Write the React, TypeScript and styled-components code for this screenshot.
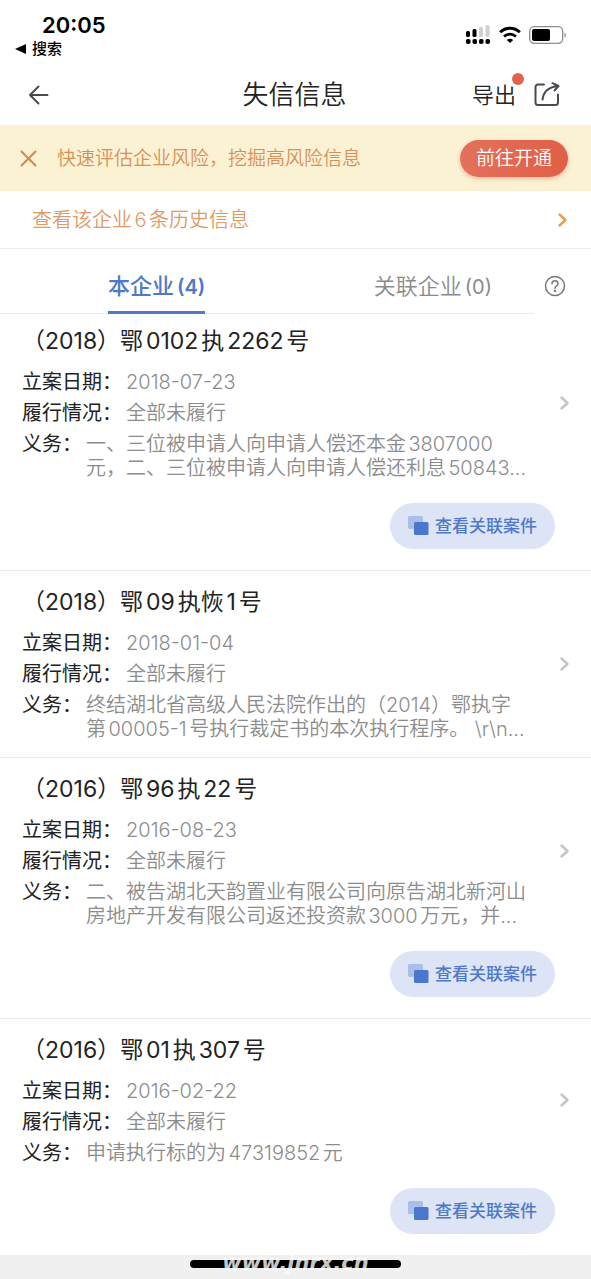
import React from 'react';
import styled, { createGlobalStyle } from 'styled-components';

const GlobalStyle = createGlobalStyle`
  *, *::before, *::after { box-sizing: border-box; }
  body {
    margin: 0;
    background: #fff;
    color: #222;
    font-family: Inter, 'Noto Sans CJK SC', sans-serif;
    text-autospace: normal;
  }
  button { font: inherit; border: 0; padding: 0; background: none; color: inherit; cursor: pointer; }
  h1, h2, p, dl, dt, dd, ul { margin: 0; padding: 0; font-weight: 400; }
  a { color: inherit; text-decoration: none; }
  svg { display: block; flex: none; }
`;

const Screen = styled.div`
  min-height: 100vh;
  display: flex;
  flex-direction: column;
`;

const StatusBar = styled.header`
  display: flex;
  justify-content: space-between;
  align-items: flex-start;
  height: 64px;
  padding: 12px 24px 0 15px;
  color: #000;
`;

const Clock = styled.div`
  padding-left: 27px;
  font-size: 22px;
  line-height: 26px;
  font-weight: 600;
`;

const BackToApp = styled.a`
  display: flex;
  align-items: center;
  gap: 6px;
  font-size: 15px;
  line-height: 22px;
  font-weight: 500;
`;

const StatusIcons = styled.div`
  display: flex;
  align-items: center;
  gap: 8px;
  padding-top: 13px;
`;

const NavBar = styled.nav`
  display: grid;
  grid-template-columns: 1fr auto 1fr;
  align-items: center;
  height: 62px;
  padding: 0 30px 0 28px;
  border-bottom: 1px solid #f0eff0;
`;

const Title = styled.h1`
  && { font-weight: 350; }
  font-size: 26px;
  line-height: 36px;
`;

const NavActions = styled.div`
  display: flex;
  justify-content: flex-end;
  align-items: center;
  gap: 18px;
`;

const ExportButton = styled.button`
  position: relative;
  && { font-size: 22px; line-height: 30px; font-weight: 350; }
`;

const Dot = styled.span`
  position: absolute;
  top: -7px;
  right: -8px;
  width: 12px;
  height: 12px;
  border-radius: 50%;
  background: #e0644b;
`;

const Banner = styled.section`
  display: flex;
  align-items: center;
  height: 65px;
  padding: 0 23px 0 20px;
  background: #fbf1d3;
  color: #d6915a;
`;

const BannerText = styled.p`
  && { font-weight: 350; }
  flex: 1;
  padding-left: 20px;
  font-size: 19px;
  line-height: 28px;
`;

const OpenButton = styled.button`
  width: 108px;
  height: 37px;
  border-radius: 19px;
  && {
    background: linear-gradient(90deg, #e4715c, #e05f46);
    color: #fff;
    font-size: 19px;
    line-height: 28px;
    font-weight: 350;
  }
  box-shadow: 0 2px 4px rgba(224, 95, 70, 0.35);
`;

const HistoryLink = styled.a`
  display: flex;
  align-items: center;
  justify-content: space-between;
  height: 58px;
  padding: 0 22px 0 32px;
  border-bottom: 1px solid #ececec;
  && { color: #e09a66; }
  font-size: 20px;
  line-height: 28px;
  font-weight: 350;
`;

const TabBar = styled.div`
  display: flex;
  height: 65px;
`;

const Tabs = styled.div`
  flex: 1;
  display: flex;
  justify-content: space-between;
  padding: 0 42px 0 108px;
  border-bottom: 1px solid #ececec;
`;

const Tab = styled.button<{ $active?: boolean }>`
  height: 65px;
  && {
    padding-top: 12px;
    border-bottom: 3px solid ${p => (p.$active ? '#5279c6' : 'transparent')};
    color: ${p => (p.$active ? '#4f78c8' : '#8a8a8a')};
    font-size: 22px;
    line-height: 30px;
    font-weight: ${p => (p.$active ? 500 : 350)};
  }
`;

const Count = styled.span<{ $active?: boolean }>`
  margin-left: 3px;
  font-size: 20px;
  font-weight: ${p => (p.$active ? 600 : 400)};
`;

const HelpButton = styled.button`
  width: 57px;
  display: flex;
  align-items: center;
  && { padding: 8px 0 0 10px; }
`;

const CaseList = styled.ul`
  margin-top: -4px;
  list-style: none;
`;

const CaseItem = styled.li`
  & + & { border-top: 1px solid #ebebeb; }
`;

const CaseBody = styled.div`
  display: flex;
  align-items: center;
  justify-content: space-between;
  gap: 12px;
  padding: 16px 20px 16px 22px;
`;

const CaseTitle = styled.h2`
  && { padding-bottom: 14px; }
  font-size: 23px;
  line-height: 30px;
`;

const Details = styled.dl`
  display: flex;
  flex-direction: column;
  gap: 7px;
`;

const Row = styled.div`
  display: flex;
  gap: 4px;
  font-size: 20px;
  line-height: 24px;
`;

const Term = styled.dt`
  flex: none;
`;

const Value = styled.dd`
  && { font-weight: 350; }
  color: #8c8c8c;
  white-space: pre;
`;

const CaseActions = styled.div`
  display: flex;
  justify-content: flex-end;
  padding: 7px 36px 21px;
`;

const RelatedButton = styled.button`
  display: flex;
  align-items: center;
  justify-content: center;
  gap: 6px;
  width: 165px;
  height: 46px;
  border-radius: 23px;
  && {
    background: #dce4f6;
    color: #4f78c8;
    font-size: 17px;
    line-height: 24px;
    font-weight: 500;
  }
`;

const Footer = styled.footer`
  position: relative;
  flex: 1;
  min-height: 23px;
  padding-top: 5px;
  background: #f0f0f0;
`;

const HomeIndicator = styled.div`
  width: 211px;
  height: 8px;
  margin: 0 auto;
  border-radius: 4px;
  background: #000;
`;

const SiteMark = styled.span`
  position: absolute;
  top: -4px;
  left: 0;
  right: 0;
  text-align: center;
  color: rgba(255, 255, 255, 0.8);
  font: italic 700 21px/24px 'DejaVu Sans', sans-serif;
`;

const SignalIcon = () => (
  <svg width="25" height="20" viewBox="0 0 25 20" aria-hidden="true">
    <rect x="0" y="6" width="4" height="6" rx="1.5" />
    <rect x="6.5" y="4" width="4" height="8" rx="1.5" />
    <rect x="13" y="2" width="4" height="10" rx="1.5" fill="#d0d0d0" />
    <rect x="19.5" y="0" width="4" height="12" rx="1.5" fill="#d0d0d0" />
    {[0, 6.5, 13, 19.5].map(x => (
      <rect key={x} x={x} y="14" width="4.5" height="5" rx="1.8" />
    ))}
  </svg>
);

const WifiIcon = () => (
  <svg width="22" height="18" viewBox="0 0 22 18" fill="none" aria-hidden="true">
    <path d="M1.2 6.2C6.700.8 15.300.8 20.8 6.2" stroke="#000" strokeWidth="3" />
    <path d="M5 10.600c3.400-3.200 8.600-3.200 12 0" stroke="#000" strokeWidth="2.8" />
    <path d="M7.800 14c1.800-1.700 4.600-1.700 6.400 0L11 17z" fill="#000" />
  </svg>
);

const BatteryIcon = () => (
  <svg width="38" height="18" viewBox="0 0 38 18" fill="none" aria-hidden="true">
    <rect x=".7" y=".7" width="33" height="16.6" rx="4.5" stroke="#8c8c8c" strokeWidth="1.3" />
    <rect x="3" y="3" width="18" height="12" rx="2" fill="#000" />
    <path d="M35.500 6.500c1.800.6 1.800 4.400 0 5z" fill="#8c8c8c" />
  </svg>
);

const Chevron = ({ color }: { color: string }) => (
  <svg width="12" height="16" viewBox="0 0 12 16" fill="none" aria-hidden="true">
    <path d="M2.500 2.500L8.500 8l-6 5.500" stroke={color} strokeWidth="2.4" strokeLinecap="round" strokeLinejoin="round" />
  </svg>
);

const ShareIcon = () => (
  <svg width="27" height="26" viewBox="0 0 27 26" fill="none" stroke="#4a4a50" strokeWidth="2" strokeLinecap="round" strokeLinejoin="round">
    <path d="M10 2.500H4A2.500 2.500 0 0 0 1.500 5v15.500A2.500 2.500 0 0 0 4 23h17.500a2.500 2.500 0 0 0 2.500-2.500v-8" />
    <path d="M8.500 17.500C9.500 10 14.500 5 24 4M18.500 1.200L24.500 4l-4 4.500" />
  </svg>
);

type CaseRecord = { title: string; date: string; status: string; duty: string; related: boolean };

const cases: CaseRecord[] = [
  {
    title: '（2018）鄂0102执2262号',
    date: '2018-07-23',
    status: '全部未履行',
    duty: '一、三位被申请人向申请人偿还本金3807000\n元，二、三位被申请人向申请人偿还利息50843...',
    related: true,
  },
  {
    title: '（2018）鄂09执恢1号',
    date: '2018-01-04',
    status: '全部未履行',
    duty: '终结湖北省高级人民法院作出的（2014）鄂执字\n第00005-1号执行裁定书的本次执行程序。 \\r\\n...',
    related: false,
  },
  {
    title: '（2016）鄂96执22号',
    date: '2016-08-23',
    status: '全部未履行',
    duty: '二、被告湖北天韵置业有限公司向原告湖北新河山\n房地产开发有限公司返还投资款3000万元，并...',
    related: true,
  },
  {
    title: '（2016）鄂01执307号',
    date: '2016-02-22',
    status: '全部未履行',
    duty: '申请执行标的为47319852元',
    related: true,
  },
];

const CaseCard = ({ item }: { item: CaseRecord }) => (
  <CaseItem>
    <CaseBody>
      <div>
        <CaseTitle>{item.title}</CaseTitle>
        <Details>
          <Row><Term>立案日期：</Term><Value>{item.date}</Value></Row>
          <Row><Term>履行情况：</Term><Value>{item.status}</Value></Row>
          <Row><Term>义务：</Term><Value>{item.duty}</Value></Row>
        </Details>
      </div>
      <Chevron color="#c4c4c6" />
    </CaseBody>
    {item.related && (
      <CaseActions>
        <RelatedButton type="button">
          <svg width="21" height="20" viewBox="0 0 21 20" aria-hidden="true">
            <rect x="0" y="0" width="15" height="13" rx="1.5" fill="#a9bfe9" />
            <rect x="6" y="6" width="14.5" height="13" rx="1.5" fill="#4b76cd" />
          </svg>
          查看关联案件
        </RelatedButton>
      </CaseActions>
    )}
  </CaseItem>
);

export default function App() {
  return (
    <Screen>
      <GlobalStyle />
      <StatusBar>
        <div>
          <Clock>20:05</Clock>
          <BackToApp href="#search">
            <svg width="11" height="10" viewBox="0 0 11 10" aria-hidden="true"><path d="M0 5L11 0v10z" /></svg>
            搜索
          </BackToApp>
        </div>
        <StatusIcons>
          <SignalIcon />
          <WifiIcon />
          <BatteryIcon />
        </StatusIcons>
      </StatusBar>
      <NavBar>
        <button type="button" aria-label="返回">
          <svg width="22" height="20" viewBox="0 0 22 20" fill="none" stroke="#4a4a50" strokeWidth="2" strokeLinecap="round" strokeLinejoin="round">
            <path d="M19.500 10H2.500M10.500 1.500L2 10l8.500 8.500" />
          </svg>
        </button>
        <Title>失信信息</Title>
        <NavActions>
          <ExportButton type="button">导出<Dot /></ExportButton>
          <button type="button" aria-label="分享"><ShareIcon /></button>
        </NavActions>
      </NavBar>
      <Banner>
        <button type="button" aria-label="关闭">
          <svg width="17" height="17" viewBox="0 0 17 17" fill="none" stroke="#d08a4e" strokeWidth="2" strokeLinecap="round">
            <path d="M1.500 1.500l14 14M15.500 1.500l-14 14" />
          </svg>
        </button>
        <BannerText>快速评估企业风险，挖掘高风险信息</BannerText>
        <OpenButton type="button">前往开通</OpenButton>
      </Banner>
      <HistoryLink href="#history">
        查看该企业6条历史信息
        <Chevron color="#e5a04e" />
      </HistoryLink>
      <TabBar>
        <Tabs role="tablist">
          <Tab type="button" role="tab" aria-selected="true" $active>本企业<Count $active>(4)</Count></Tab>
          <Tab type="button" role="tab" aria-selected="false">关联企业<Count>(0)</Count></Tab>
        </Tabs>
        <HelpButton type="button" aria-label="帮助">
          <svg width="22" height="22" viewBox="0 0 22 22" fill="none" stroke="#77777d" strokeWidth="1.5" strokeLinecap="round">
            <circle cx="11" cy="11" r="9.5" />
            <path d="M8 8.800c0-4 6-4 6 0 0 2-3 2.200-3 4.500" />
            <circle cx="11" cy="16" r=".5" />
          </svg>
        </HelpButton>
      </TabBar>
      <CaseList>
        {cases.map(item => <CaseCard key={item.title} item={item} />)}
      </CaseList>
      <Footer>
        <HomeIndicator />
        <SiteMark>www.jnrx.cn</SiteMark>
      </Footer>
    </Screen>
  );
}
